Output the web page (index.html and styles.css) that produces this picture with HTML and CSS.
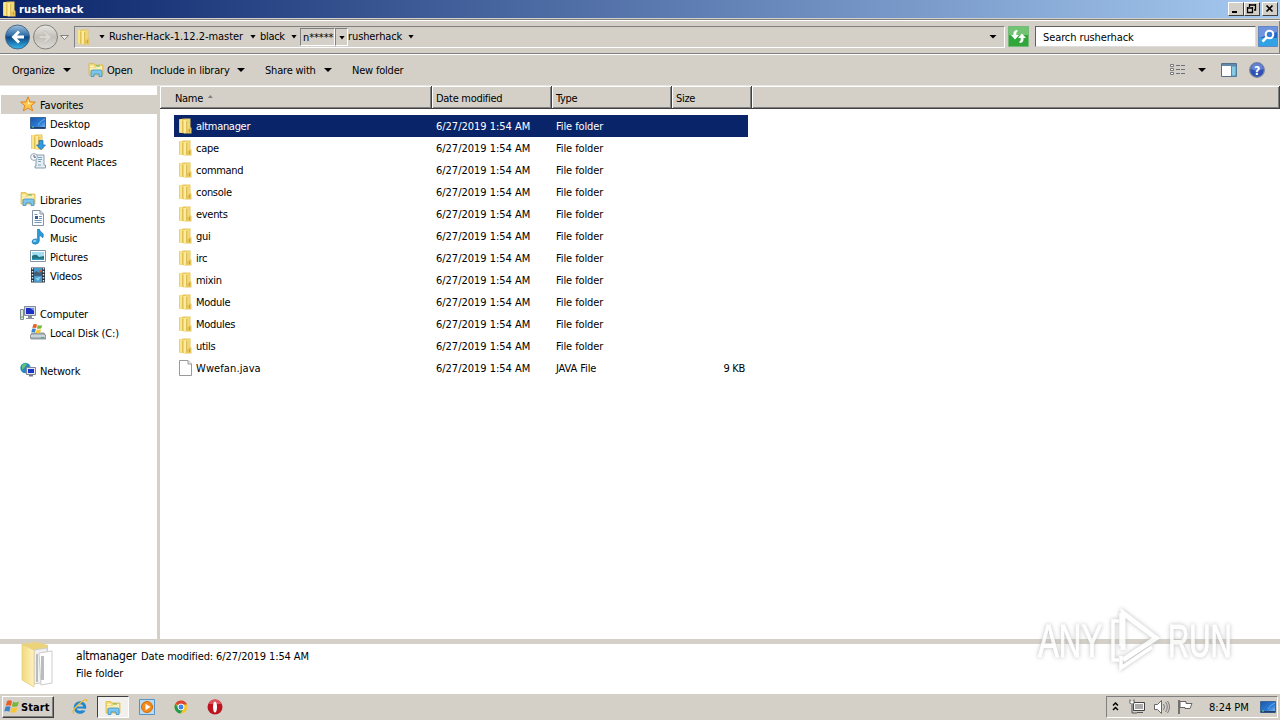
FILE: index.html
```
<!DOCTYPE html>
<html lang="en">
<head>
  <meta charset="utf-8">
  <title>rusherhack</title>
  <link rel="stylesheet" href="styles.css">
</head>
<body>
  <svg class="defs">
    <defs>
      <linearGradient id="gold" x2="1"><stop offset="0" stop-color="#e9c64f"/><stop offset=".5" stop-color="#fff0a0"/><stop offset="1" stop-color="#e6c352"/></linearGradient>
      <linearGradient id="pale" x2="1"><stop offset="0" stop-color="#f0d97e"/><stop offset="1" stop-color="#fff3c0"/></linearGradient>
      <linearGradient id="blue" x2="1" y2="1"><stop offset="0" stop-color="#1c55a8"/><stop offset=".6" stop-color="#2b7bd6"/><stop offset="1" stop-color="#8cc6f2"/></linearGradient>
      <linearGradient id="orb" x2="0" y2="1"><stop offset="0" stop-color="#9fc0dc"/><stop offset=".45" stop-color="#2a6ba8"/><stop offset=".5" stop-color="#0d4580"/><stop offset="1" stop-color="#35b8ee"/></linearGradient>
      <linearGradient id="orbGray" x2="0" y2="1"><stop offset="0" stop-color="#e8e6e2"/><stop offset=".5" stop-color="#c3c0bb"/><stop offset="1" stop-color="#dedbd6"/></linearGradient>
    </defs>
    <symbol id="folder" viewBox="0 0 16 16">
      <path d="M2 1.500 7 .5h6.500V9l1 1v5.500H8L2 14.500z" fill="#e6c65c"/>
      <path d="M2 1.500 6 .8v14.200l-4-.6z" fill="url(#gold)"/>
      <path d="M6 2.500 9.500 1.500v12.500L7.500 15.500 6 14z" fill="#fcec9c"/>
      <path d="M10 1.200h2.800V9L10 12z" fill="#f2d977"/>
      <path d="M6 3v11.500M9.700 3v11" stroke="#cfa93e" stroke-width=".7"/>
      <path d="M12.500 11v3" stroke="#b6a469"/>
    </symbol>
    <symbol id="library" viewBox="0 0 16 16">
      <path d="M1 1.500h5l1 1.500h8V13H1z" fill="#f3d873" stroke="#d9b446" stroke-width=".7"/>
      <path d="M2 4.500h4M8 5h6M2 7h12" stroke="#fff6cd" stroke-width="1.300"/>
      <path d="M8 4h4" stroke="#5bb561"/>
      <path d="M3 14.500V9.500Q3 8 4.500 8h8Q14 8 14 9.500v5h-3V12H6v2.500z" fill="#7cc6ee" stroke="#3b8fc5" stroke-width=".8"/>
    </symbol>
    <symbol id="star" viewBox="0 0 16 16">
      <path d="m8 .8 2 5 5.400.3-4.200 3.500 1.500 5.300L8 12l-4.700 2.900 1.500-5.300L.6 6.100 6 5.800z" fill="#ffc84b" stroke="#df8424"/>
      <path d="m8 3 1 4 3 .4-4 1z" fill="#fff0a4"/>
    </symbol>
    <symbol id="desktop" viewBox="0 0 16 16">
      <path d="M.5 2.500h15v11H.5z" fill="url(#blue)" stroke="#3d6698"/>
      <path d="M1 12h14v1.500H1z" fill="#233e68"/><path d="M2 12h2" stroke="#73d47a"/>
      <path d="M8 10Q11 5 15 4" stroke="#67ace7" fill="none"/>
    </symbol>
    <symbol id="downloads" viewBox="0 0 16 16">
      <use href="#folder" x="-1" width="16" height="16"/>
      <path d="M9 6.500h4V11h2.500L11 15.700 6.500 11H9z" fill="#2f9be2" stroke="#1b69aa" stroke-width=".7"/>
    </symbol>
    <symbol id="recent" viewBox="0 0 16 16">
      <path d="M5 2h9v10h1.500v3H5v-2h1V5H5z" fill="#e5edf3" stroke="#8b9dab"/>
      <path d="M8 4.500h4M8 6.500h4M8 8.500h3M8 12h3" stroke="#76a6c8"/>
      <circle cx="4" cy="4" r="3.400" fill="#f8fbfd" stroke="#93a6b3"/><path d="M4 2v2.200h2" fill="none" stroke="#557"/>
    </symbol>
    <symbol id="document" viewBox="0 0 16 16">
      <path d="M2.500.5H10l3.500 3.500v11.500h-11z" fill="#fbfdff" stroke="#8294a5"/>
      <path d="M10 .5V4h3.500" fill="none" stroke="#8294a5"/>
      <path d="M4.500 4.500h3M9 6.500h3M9 8.500h3M4.500 10.500h7M4.500 12.500h7" stroke="#7796b5"/><path d="M5 6h3v3H5z" fill="#345f91"/>
    </symbol>
    <symbol id="music" viewBox="0 0 16 16">
      <path d="M7.500 0h1.800q.3 2.500 3.200 4 1.800 1.500.2 5Q12 7 9.300 6.500V12q-.3 3-4 3.200-3.300 0-3.300-2.400 0-2.700 3.600-2.900 1.400 0 1.900.4z" fill="#2c9ad8" stroke="#2072aa" stroke-width=".6"/>
      <ellipse cx="4.800" cy="12" rx="1.600" ry=".9" fill="#92dcfb"/>
    </symbol>
    <symbol id="picture" viewBox="0 0 16 16">
      <path d="M.5 2.500h15v11H.5z" fill="#fff" stroke="#8295a3"/>
      <path d="M2 4h12v8H2z" fill="#a2ddf2"/><path d="M2 8q4-3 7 1l5-1v4H2z" fill="#22717d"/><path d="M2 10.500h12V12H2z" fill="#2d97b6"/>
    </symbol>
    <symbol id="video" viewBox="0 0 16 16">
      <path d="M1 .5h14v15H1z" fill="#273442"/><path d="M4 1h8v6.500H4zM4 8.500h8V15H4z" fill="#4998ce"/>
      <path d="M4 6q2-3 4-1t4-1v3.500H4z" fill="#4a5a68"/><path d="M9 3h2v2H9z" fill="#c0614a"/><path d="m5 11 3 3 3-4" fill="#8bd0e8"/>
      <path d="M2.500 1v14M13.500 1v14" stroke="#e7edf2" stroke-width="1.400" stroke-dasharray="1.500"/>
    </symbol>
    <symbol id="computer" viewBox="0 0 16 16">
      <path d="M.5 4.500h3v10h-3z" fill="#dce2dc" stroke="#7d8d8d"/><path d="M1 12h2" stroke="#54ae45"/>
      <path d="M4.500 1.500h11v9h-11z" fill="#d5dbe5" stroke="#81899c"/><path d="M6 3h8v6H6z" fill="#1c2fc3"/><path d="M10 3h4v3z" fill="#7291ed"/>
      <path d="M8 11h4v2h2v1H6v-1h2z" fill="#88909b"/>
    </symbol>
    <symbol id="disk" viewBox="0 0 16 16">
      <path d="M2 9h12l2 3v3H1l-1-3z" fill="#a9b5bd" stroke="#68747b" stroke-width=".7"/><path d="M1 12h14" stroke="#ecf2f5"/><path d="M11 13.500h3" stroke="#39bc4f"/>
      <use href="#windows" x="1" y="-1" width="12" height="12"/>
    </symbol>
    <symbol id="windows" viewBox="0 0 16 16">
      <path d="M3 2q3-1.500 5 .3L6.800 7Q4.500 5.500 1.800 6.700z" fill="#e95f2b"/><path d="M9 2.700q3 1.500 6-.2L13.700 7q-3 1.500-5.800.2z" fill="#76b739"/>
      <path d="M1.500 7.800q3-1.300 5 .2l-1.200 4.800Q3 11.500.3 12.600z" fill="#3b83cb"/><path d="M7.600 8.300q3 1.500 5.900 0l-1.400 4.600q-3 1.400-5.700.2z" fill="#f8c534"/>
    </symbol>
    <symbol id="network" viewBox="0 0 16 16">
      <circle cx="5.500" cy="6" r="5.200" fill="#2489c2"/><path d="M2 3q3-3 5-1L5 5 2 8zM7 6l3-2v4l-2 2z" fill="#61c17a"/>
      <path d="M6.500 5.500h9v7h-9z" fill="#e4e8ef" stroke="#7b8798"/><path d="M8 7h6v4H8z" fill="#1a35c8"/><path d="M9 13h4v1.500H9z" fill="#6b7787"/>
    </symbol>
    <symbol id="file" viewBox="0 0 16 16"><path d="M2.500.5H11l3.500 3.500v11.500h-12z" fill="#fff" stroke="#999"/><path d="M11 .5V4h3.500" fill="#eee" stroke="#999"/></symbol>
  </svg>

  <div class="titlebar">
    <svg class="icon"><use href="#folder"/></svg>
    <span class="title">rusherhack</span>
    <div class="win-buttons">
      <span class="win-btn"><svg width="14" height="11"><path d="M3 9h5" stroke="#000" stroke-width="2"/></svg></span>
      <span class="win-btn"><svg width="14" height="11"><path d="M4 2h7M4.500 1v3M10.500 1v6H9M2 5h6M2.500 4v5.500h5V4" fill="none" stroke="#000" stroke-width="1.300"/></svg></span>
      <span class="win-btn close"><svg width="13" height="11"><path d="m3.500 2.500 6 6M9.500 2.500l-6 6" stroke="#000" stroke-width="1.700"/></svg></span>
    </div>
  </div>

  <div class="nav">
    <svg class="orbs" width="72" height="30">
      <circle cx="17.500" cy="15" r="12" fill="url(#orb)" stroke="#47698a"/>
      <path d="M24 13.500h-7l3-3-2-2-6.500 6.500 6.500 6.500 2-2-3-3h7z" fill="#fff"/>
      <circle cx="45.500" cy="15" r="12" fill="url(#orbGray)" stroke="#85827c"/>
      <path d="M39 13.500h7l-3-3 2-2 6.500 6.500-6.500 6.500-2-2 3-3h-7z" fill="#dad7d2" stroke="#bbb8b1" stroke-width=".7"/>
      <path d="M60.500 13.500h8l-4 4z" fill="#eee" stroke="#85827c"/>
    </svg>
    <div class="address">
      <svg class="icon"><use href="#folder"/></svg>
      <i class="arrow first"></i>
      <span class="crumb c1">Rusher-Hack-1.12.2-master</span><i class="arrow"></i>
      <span class="crumb c2">black</span><i class="arrow"></i>
      <span class="crumb pressed">n*****</span><span class="pressed-arrow"><i class="arrow"></i></span>
      <span class="crumb c4">rusherhack</span><i class="arrow"></i>
      <i class="arrow big last"></i>
    </div>
    <svg class="refresh" width="21" height="21"><path d="M.5.500h20v20H.5z" fill="#31a63b" stroke="#75b978"/><path d="M1 1h19v8H1z" fill="#72c374"/><path d="M9.500 4Q5 4 5.500 9H3l4 4.500L11 9H8.300Q8 6 9.500 5.500zM11.500 17q4.500 0 4-5H18l-4-4.500L10 12h2.700q.3 3-1.200 3.500z" fill="#fff"/></svg>
    <div class="search">Search rusherhack</div>
    <svg class="go" width="20" height="21"><path d="M.5.500h19v20H.5z" fill="#2366cb" stroke="#6387c2"/><path d="M1 12h18v8H1z" fill="#31a3e4"/><path d="M1 1h18v5L1 12z" fill="#6f94dd"/><circle cx="11.500" cy="8.500" r="3.800" fill="#397bd4" stroke="#fff" stroke-width="2"/><path d="m8.500 11.500-4 4" stroke="#fff" stroke-width="2.500"/></svg>
  </div>

  <div class="toolbar">
    <span class="tool organize">Organize</span><i class="arrow big"></i>
    <svg class="icon open-icon"><use href="#library"/></svg>
    <span class="tool open">Open</span>
    <span class="tool include">Include in library</span><i class="arrow big"></i>
    <span class="tool share">Share with</span><i class="arrow big"></i>
    <span class="tool newf">New folder</span>
    <div class="views">
      <svg width="16" height="12"><path d="M.5.500h3v2h-3zM.5 4.500h3v2h-3zM.5 8.500h3v2h-3z" fill="#fff" stroke="#777"/><path d="M6 1.500h4M11 1.500h4M6 5.500h4M11 5.500h4M6 9.500h4M11 9.500h4" stroke="#66727e"/></svg>
      <i class="arrow big"></i>
      <svg class="pane" width="16" height="14"><path d="M.5.500h15v13H.5z" fill="#fff" stroke="#536f8c"/><path d="M1 2h14" stroke="#6289ac" stroke-width="2"/><path d="M10.500 3v10H15V3z" fill="#8acbe4" stroke="#4c8eaf"/></svg>
      <svg width="16" height="16"><circle cx="8" cy="8" r="7.300" fill="#2d50b7" stroke="#76849f" stroke-width="1.300"/><path d="M2 7a6 6 0 0 1 12 0q-6 3-12 0" fill="#6382d4"/><text x="8" y="12.500" class="help">?</text></svg>
    </div>
  </div>

  <div class="main">
    <div class="sidebar">
      <div class="side head on"><svg class="icon"><use href="#star"/></svg><span>Favorites</span></div>
      <div class="side"><svg class="icon"><use href="#desktop"/></svg><span>Desktop</span></div>
      <div class="side"><svg class="icon"><use href="#downloads"/></svg><span>Downloads</span></div>
      <div class="side"><svg class="icon"><use href="#recent"/></svg><span>Recent Places</span></div>
      <div class="side head gap"><svg class="icon"><use href="#library"/></svg><span>Libraries</span></div>
      <div class="side"><svg class="icon"><use href="#document"/></svg><span>Documents</span></div>
      <div class="side"><svg class="icon"><use href="#music"/></svg><span>Music</span></div>
      <div class="side"><svg class="icon"><use href="#picture"/></svg><span>Pictures</span></div>
      <div class="side"><svg class="icon"><use href="#video"/></svg><span>Videos</span></div>
      <div class="side head gap"><svg class="icon"><use href="#computer"/></svg><span>Computer</span></div>
      <div class="side"><svg class="icon"><use href="#disk"/></svg><span>Local Disk (C:)</span></div>
      <div class="side head gap"><svg class="icon"><use href="#network"/></svg><span>Network</span></div>
    </div>
    <div class="content">
      <div class="columns">
        <div class="col name">Name <i class="sort"></i></div>
        <div class="col">Date modified</div>
        <div class="col">Type</div>
        <div class="col size">Size</div>
        <div class="col rest"></div>
      </div>
      <div class="rows" id="rows"></div>
    </div>
  </div>

  <div class="details">
    <svg class="big-folder" width="34" height="46" viewBox="0 0 34 46">
      <path d="M1 2 15 0l12 3v6L13 40 1 37z" fill="#ead37b"/>
      <path d="m13 8 13-2v34l-13 2z" fill="#f1f1f1" stroke="#ccc"/><path d="m18 11 13-2v32l-11 2z" fill="#fff" stroke="#ccc"/>
      <path d="M20 14h3v24h-3zM15 12h2v28h-2z" fill="#b9bcc1"/>
      <path d="m1 2 12 6v37L1 38z" fill="url(#pale)" stroke="#e3cb74" stroke-width=".7"/>
    </svg>
    <div class="info">
      <div><span class="sel-name">altmanager</span><span class="mod">Date modified: 6/27/2019 1:54 AM</span></div>
      <div class="kind">File folder</div>
    </div>
  </div>

  <div class="taskbar">
    <div class="start"><svg class="icon"><use href="#windows"/></svg><span>Start</span></div>
    <svg class="icon ie" viewBox="0 0 16 16"><circle cx="8" cy="8.500" r="4.800" fill="none" stroke="#1f86d0" stroke-width="3"/><path d="M5 8.500h8.500" stroke="#1f86d0" stroke-width="2"/><path d="M10.500 9.700h5v1.800h-5z" fill="#d4d0c8"/><path d="M2 14.500Q-1 12 7 5t8-2.500" fill="none" stroke="#edbd35" stroke-width="1.500"/></svg>
    <div class="active"><svg class="icon"><use href="#library"/></svg></div>
    <svg class="icon wmp" viewBox="0 0 16 16"><path d="M.5.500h15v15H.5z" fill="#b9dcf5" stroke="#5595c5"/><circle cx="8" cy="8" r="5.500" fill="#f28b1d" stroke="#d76908"/><path d="m6.500 4.800 5 3.200-5 3.200z" fill="#fff"/></svg>
    <svg class="icon chrome" viewBox="0 0 16 16"><circle cx="8" cy="8" r="6.500" fill="#f5c628"/><path d="M8 8 2.300 4.800A6.500 6.500 0 0 1 14 5.500H8z" fill="#dc4437"/><path d="M2.300 4.800A6.500 6.500 0 0 0 7.500 14.500L10.500 9.500H6z" fill="#219b53"/><circle cx="8" cy="8" r="3" fill="#4382e8" stroke="#fff"/></svg>
    <svg class="icon opera" viewBox="0 0 16 16"><circle cx="8" cy="8" r="7.500" fill="#bd1420"/><path d="M1.500 5a7 7 0 0 1 13 0z" fill="#dd535b"/><ellipse cx="8" cy="8" rx="2" ry="5.500" fill="#fff"/></svg>
    <div class="tray">
      <svg width="9" height="12"><path d="m2 4.500 2.500-2.500L7 4.500M2 9 4.500 6.500 7 9" fill="none" stroke="#000" stroke-width="1.500"/></svg>
      <svg class="net" width="16" height="16"><path d="M4.500 3.500h11v8h-11z" fill="#aaa" stroke="#444"/><path d="M5.500 4.500h9v6h-9z" fill="none" stroke="#fff"/><path d="M8 13.500h6M1 .5v4h4v-4M3 5v9h5" fill="none" stroke="#555"/><path d="M1.500 2.500h3v2h-3z" fill="#fff"/></svg>
      <svg class="sound" width="17" height="16"><path d="M1.500 5.500h3l4-4v13l-4-4h-3z" fill="#fff" stroke="#666"/><path d="M10.500 5q2 3 0 6M12.500 3q3.500 5 0 10M14.500 2q4 6 0 12" fill="none" stroke="#777"/></svg>
      <svg class="flag" width="17" height="16"><path d="M2 1v14" stroke="#555" stroke-width="1.500"/><path d="M3 2.500h6v2h6l-2 5H8v-1H3z" fill="#fff" stroke="#666"/></svg>
      <span class="clock">8:24 PM</span>
      <svg class="icon show"><use href="#desktop"/></svg>
    </div>
  </div>

  <div class="watermark">
    <span class="any">ANY</span>
    <svg width="58" height="66"><path d="M15 13H9v39h6M17 5v33M17 48v12l31-21" fill="none" stroke="#fff" stroke-width="3.500"/><path d="M19 42V5l33 25-33 22" fill="none" stroke="#fff" stroke-width="5"/></svg>
    <span class="run">RUN</span>
  </div>

  <script>
    const names = ["altmanager", "cape", "command", "console", "events", "gui", "irc", "mixin", "Module", "Modules", "utils", "Wwefan.java"];

    document.getElementById("rows").innerHTML = names.map((name, i) => {
      const isFile = name.endsWith(".java");
      return `<div class="row${i === 0 ? " selected" : ""}">
        <svg class="icon"><use href="#${isFile ? "file" : "folder"}"/></svg>
        <span class="fname${isFile ? " wide" : ""}">${name}</span>
        <span class="date">6/27/2019 1:54 AM</span>
        <span class="type">${isFile ? "JAVA File" : "File folder"}</span>
        <span class="fsize">${isFile ? "9 KB" : ""}</span>
      </div>`;
    }).join("\n");
  </script>
</body>
</html>
```
FILE: styles.css
```
* {
  box-sizing: border-box;
}
body {
  margin: 0;
  width: 1280px;
  height: 720px;
  overflow: hidden;
  display: flex;
  flex-direction: column;
  background: #d4d0c8;
  font-family: "DejaVu Sans Condensed", "DejaVu Sans", sans-serif;
  font-stretch: condensed;
  font-size: 11px;
  letter-spacing: -0.3px;
  color: #000;
  white-space: nowrap;
}
svg {
  display: block;
  flex: none;
}
.defs {
  position: absolute;
  width: 0;
  height: 0;
}
.icon {
  width: 16px;
  height: 16px;
}

.titlebar {
  height: 18px;
  flex: none;
  display: flex;
  align-items: center;
  padding: 0 2px 0 1px;
  background: linear-gradient(to right, #0a246a, #a6caf0);
}
.title {
  color: #fff;
  font-weight: bold;
  margin-left: 2px;
  letter-spacing: 0.2px;
}
.win-buttons {
  margin-left: auto;
  display: flex;
}
.win-btn {
  width: 16px;
  height: 14px;
  background: #d4d0c8;
  border: 1px solid;
  border-color: #fff #404040 #404040 #fff;
}
.close {
  margin-left: 2px;
}

.nav {
  height: 36px;
  flex: none;
  display: flex;
  align-items: center;
  margin-top: 1px;
  padding-bottom: 1px;
  border-top: 1px solid #808080;
  border-bottom: 1px solid #fff;
  box-shadow: inset 0 1px #fff, inset 0 -1px #808080, inset -1px 0 #808080;
}
.orbs {
  width: 74px;
}
.address {
  width: 931px;
  height: 22px;
  display: flex;
  align-items: center;
  border: 1px solid;
  border-color: #808080 #fff #fff #808080;
}
.arrow {
  display: block;
  flex: none;
  width: 6px;
  height: 4px;
  margin-right: -1px;
  background: #000;
  clip-path: polygon(0 0, 100% 0, 50% 100%);
}
.big {
  width: 8px;
  margin-right: 0;
}
.first {
  margin-left: 8px;
  margin-right: 4px;
}
.crumb {
  flex: none;
}
.c1 {
  width: 141px;
  letter-spacing: -0.05px;
}
.c2 {
  width: 31px;
  margin-left: 5px;
}
.pressed {
  width: 35px;
  height: 18px;
  margin-left: 4px;
  padding: 2px 0 0 2px;
  letter-spacing: -0.1px;
  border: 1px solid;
  border-color: #808080 #fff #fff #808080;
}
.pressed-arrow {
  width: 13px;
  height: 18px;
  padding: 7px 0 0 3px;
  border: 1px solid;
  border-color: #808080 #fff #fff #808080;
}
.c4 {
  width: 60px;
  letter-spacing: -0.1px;
}
.address .last {
  margin-left: auto;
  margin-right: 7px;
}
.refresh {
  margin-left: 3px;
}
.search {
  width: 221px;
  height: 21px;
  margin-left: 6px;
  padding: 4px 0 0 7px;
  letter-spacing: -0.1px;
  background: #fff;
  border: 1px solid;
  border-color: #606060 #ddd #ddd #606060;
}
.go {
  margin-left: 2px;
}

.toolbar {
  height: 31px;
  flex: none;
  display: flex;
  align-items: center;
  padding-left: 12px;
  letter-spacing: -0.2px;
  border-bottom: 1px solid #e8e6e2;
}
.organize {
  width: 51px;
}
.open-icon {
  margin-left: 17px;
}
.open {
  width: 43px;
  margin-left: 3px;
}
.include {
  width: 87px;
}
.share {
  width: 59px;
  margin-left: 20px;
}
.newf {
  margin-left: 20px;
}
.views {
  margin-left: auto;
  padding-right: 15px;
  display: flex;
  align-items: center;
  gap: 12px;
}
.pane {
  margin-left: 3px;
}
.help {
  fill: #fff;
  font-weight: bold;
  font-size: 12px;
  text-anchor: middle;
}

.main {
  height: 553px;
  flex: none;
  display: flex;
}
.sidebar {
  width: 157px;
  padding-top: 9px;
  background: #fff;
}
.side {
  height: 19px;
  display: flex;
  align-items: center;
  padding-left: 30px;
  gap: 4px;
  letter-spacing: -0.15px;
}
.side span {
  padding-top: 2px;
}
.side .icon {
  margin-top: -1px;
}
.head {
  padding-left: 20px;
}
.on {
  margin-left: 1px;
  padding-left: 19px;
  background: #d4d0c8;
}
.gap {
  margin-top: 19px;
}
.content {
  flex: 1;
  margin-left: 3px;
  background: #fff;
}
.columns {
  height: 23px;
  display: flex;
  background: #d4d0c8;
  border-bottom: 1px solid #404040;
  box-shadow: inset 0 -1px #808080;
}
.col {
  width: 120px;
  padding: 6px 0 0 4px;
  border-right: 1px solid #404040;
  box-shadow: inset 1px 1px #fff, inset -1px -1px #808080;
}
.name {
  width: 272px;
  padding-left: 15px;
}
.size {
  width: 80px;
}
.rest {
  flex: 1;
}
.sort {
  display: inline-block;
  width: 5px;
  height: 3px;
  margin: 0 0 4px 2px;
  background: #808080;
  clip-path: polygon(0 100%, 100% 100%, 50% 0);
}
.rows {
  padding: 6px 0 0 14px;
}
.row {
  width: 574px;
  height: 22px;
  display: flex;
  align-items: center;
  padding: 0 3px;
}
.row .icon {
  margin-top: -1px;
}
.selected {
  background: #0a246a;
  color: #fff;
}
.fname {
  width: 240px;
  padding-left: 3px;
}
.wide {
  letter-spacing: 0.1px;
}
.date {
  width: 120px;
  padding-left: 3px;
  letter-spacing: -0.02px;
}
.type {
  width: 120px;
  padding-left: 3px;
  letter-spacing: -0.1px;
}
.fsize {
  margin-left: auto;
}

.details {
  height: 54px;
  flex: none;
  display: flex;
  background: #fff;
  border-top: 5px solid #d4d0c8;
  padding-left: 21px;
}
.big-folder {
  margin-top: -2px;
}
.info {
  padding: 5px 0 0 21px;
}
.sel-name {
  display: inline-block;
  width: 65px;
  font-size: 12px;
  letter-spacing: -0.2px;
}
.mod {
  letter-spacing: -0.1px;
}
.kind {
  margin-top: 4px;
  letter-spacing: -0.1px;
}

.taskbar {
  height: 27px;
  flex: none;
  display: flex;
  align-items: center;
  border-top: 1px solid #fff;
  padding: 0 2px;
}
.start {
  width: 52px;
  height: 22px;
  display: flex;
  align-items: center;
  gap: 1px;
  padding-left: 1px;
  font-weight: bold;
  letter-spacing: 0.1px;
  border: 1px solid;
  border-color: #fff #404040 #404040 #fff;
  box-shadow: inset -1px -1px #808080;
}
.ie {
  margin-left: 18px;
}
.active {
  width: 32px;
  height: 22px;
  margin-left: 9px;
  padding: 3px 0 0 7px;
  background: #f2f0ed;
  border: 1px solid;
  border-color: #404040 #fff #fff #404040;
}
.wmp {
  margin-left: 10px;
}
.chrome {
  margin-left: 18px;
}
.opera {
  margin-left: 18px;
}
.tray {
  width: 172px;
  height: 22px;
  margin-left: auto;
  display: flex;
  align-items: center;
  padding-left: 4px;
  border: 1px solid;
  border-color: #808080 #fff #fff #808080;
}
.net {
  margin-left: 9px;
}
.sound {
  margin-left: 8px;
}
.flag {
  margin-left: 7px;
}
.clock {
  width: 41px;
  margin-left: 15px;
  letter-spacing: 0;
}
.show {
  margin-left: 10px;
}

.watermark {
  position: absolute;
  left: 1038px;
  top: 607px;
  display: flex;
  align-items: center;
  font-family: "Liberation Sans", sans-serif;
  font-size: 46px;
  line-height: 68px;
  letter-spacing: 0;
  color: #fff;
  opacity: 0.85;
  filter: drop-shadow(0 0 2px #b0b0b0);
}
.any, .run {
  width: 66px;
  transform: scaleX(0.68);
  transform-origin: left;
}
.any {
  -webkit-text-stroke: 1px #fff;
}
.run {
  margin-left: 6px;
  transform: scaleX(0.64);
  -webkit-text-stroke: 1px #fff;
}
```
